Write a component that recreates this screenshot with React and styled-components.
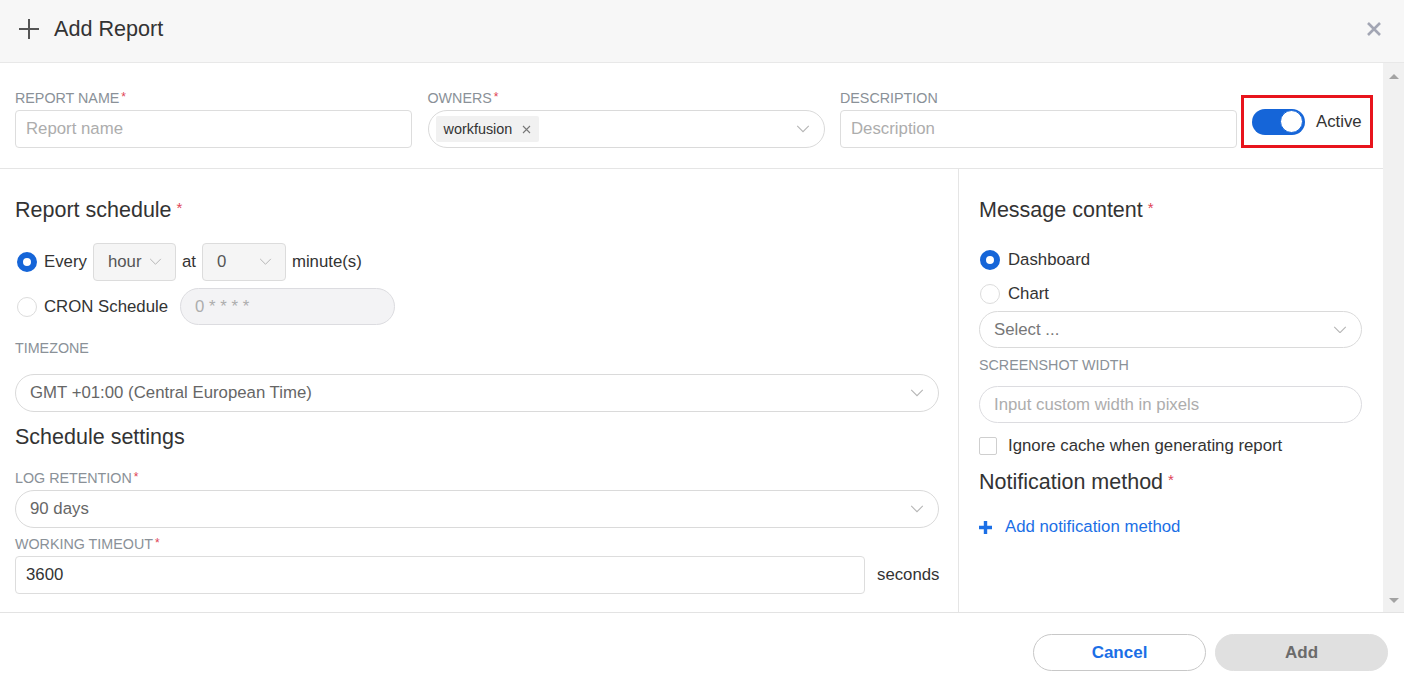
import React from 'react';
import styled, { createGlobalStyle } from 'styled-components';

const GlobalStyle = createGlobalStyle`
    html, body {
        margin: 0;
        padding: 0;
        background: #ffffff;
    }
    body {
        font-family: "Liberation Sans", Arial, sans-serif;
        color: #333;
    }
    * {
        box-sizing: border-box;
    }
`;

const Modal = styled.div`
    width: 1404px;
    height: 684px;
    display: flex;
    flex-direction: column;
    background: #fff;
    overflow: hidden;
`;

const Header = styled.header`
    height: 63px;
    flex: none;
    display: flex;
    align-items: center;
    padding: 0 22px 4px 19px;
    background: #f7f7f7;
    border-bottom: 1px solid #e8e8e8;
`;

const Title = styled.h1`
    margin: 0 0 0 15px;
    flex: 1;
    font-size: 21.6px;
    font-weight: 400;
    color: #333;
`;

const CloseButton = styled.button`
    border: none;
    background: none;
    padding: 0;
    display: flex;
    cursor: pointer;
`;

const Body = styled.div`
    flex: 1;
    display: flex;
    min-height: 0;
`;

const Content = styled.div`
    flex: 1;
    display: flex;
    flex-direction: column;
    overflow: hidden;
`;

const ScrollTrack = styled.div`
    width: 21px;
    flex: none;
    background: #f1f1f1;
    display: flex;
    flex-direction: column;
    justify-content: space-between;
    align-items: center;
    padding: 11px 0 9px;
`;

const Arrow = styled.div`
    width: 0;
    height: 0;
    border-left: 5px solid transparent;
    border-right: 5px solid transparent;
    ${({ $down }) =>
        $down ? 'border-top: 5px solid #a3a3a3;' : 'border-bottom: 5px solid #a3a3a3;'}
`;

const TopRow = styled.div`
    display: grid;
    grid-template-columns: 397px 397px 397px 132px;
    column-gap: 15.5px;
    padding: 27px 10px 20px 15px;
    border-bottom: 1px solid #e5e5e5;
    align-items: start;
`;

const Field = styled.div`
    display: flex;
    flex-direction: column;
`;

const Label = styled.label`
    display: block;
    font-size: 14.3px;
    line-height: 16px;
    color: #8a9198;
    text-transform: uppercase;
    white-space: nowrap;
    margin-top: ${({ $mt }) => $mt || 0}px;
    margin-bottom: 4px;
`;

const Req = styled.span`
    color: #e04355;
    margin-left: ${({ $big }) => ($big ? '5px' : '2px')};
    font-size: ${({ $big }) => ($big ? '15px' : '12px')};
    vertical-align: top;
    position: relative;
    top: ${({ $big }) => ($big ? '-2px' : '-1px')};
`;

const TextInput = styled.div`
    height: ${({ $h }) => $h || 38}px;
    width: ${({ $w }) => ($w ? `${$w}px` : '100%')};
    flex: none;
    display: flex;
    align-items: center;
    padding: 0 10px;
    border: 1px solid ${({ $pill }) => ($pill ? '#dcdce0' : '#dddddd')};
    border-radius: ${({ $pill }) => ($pill ? '19px' : '4px')};
    background: ${({ $muted }) => ($muted ? '#f3f3f5' : '#fff')};
    font-size: 16.8px;
    color: ${({ $placeholder }) => ($placeholder ? '#adadad' : '#333')};
    margin-top: ${({ $mt }) => $mt || 0}px;
    ${({ $pill }) => $pill && 'padding: 0 14px;'}
`;

const SelectBox = styled.div`
    height: ${({ $h }) => $h || 38}px;
    display: flex;
    align-items: center;
    justify-content: space-between;
    padding: 0 14px 0 14px;
    border: 1px solid #dadada;
    border-radius: 19px;
    background: #fff;
    font-size: 16.8px;
    color: ${({ $placeholder }) => ($placeholder ? '#777' : '#666')};
    margin-top: ${({ $mt }) => $mt || 0}px;
`;

const Tag = styled.span`
    display: inline-flex;
    align-items: center;
    gap: 10px;
    height: 26px;
    padding: 0 8px 0 8px;
    margin-left: -7px;
    background: #f1f1f1;
    border-radius: 2px;
    font-size: 14.4px;
    color: #333;
`;

const OwnerValue = styled.div`
    flex: 1;
    display: flex;
    align-items: center;
`;

const ToggleBox = styled.div`
    justify-self: start;
    width: 132px;
    margin: 5px 0 0 -11.5px;
    height: 53px;
    border: 3px solid #e8141c;
    display: flex;
    align-items: center;
    padding-left: 8px;
    gap: 11px;
    font-size: 16.8px;
    color: #333;
`;

const Switch = styled.span`
    width: 53px;
    height: 26px;
    flex: none;
    border-radius: 13px;
    background: #1565d8;
    display: flex;
    align-items: center;
    justify-content: flex-end;
    padding: 2px;
`;

const Knob = styled.span`
    width: 23px;
    height: 23px;
    border-radius: 50%;
    background: #fff;
    border: 1px solid #1565d8;
`;

const Columns = styled.div`
    flex: 1;
    display: flex;
`;

const LeftCol = styled.div`
    width: 959px;
    flex: none;
    padding: 0 19px 0 15px;
    border-right: 1px solid #e5e5e5;
`;

const RightCol = styled.div`
    flex: 1;
    padding: 0 21px 0 20px;
`;

const SectionTitle = styled.h2`
    margin: ${({ $mt }) => $mt || 0}px 0 0;
    font-size: 21.5px;
    line-height: 24px;
    font-weight: 400;
    color: #333;
`;

const Row = styled.div`
    display: flex;
    align-items: center;
    gap: ${({ $gap }) => $gap || 8}px;
    height: ${({ $h }) => $h || 20}px;
    margin-top: ${({ $mt }) => $mt || 0}px;
    font-size: 16.8px;
    color: #333;
    white-space: nowrap;
`;

const Radio = styled.span`
    width: 20px;
    height: 20px;
    flex: none;
    border-radius: 50%;
    margin-left: ${({ $ml }) => $ml || 0}px;
    margin-right: ${({ $mr }) => $mr || 0}px;
    ${({ $checked }) =>
        $checked
            ? 'border: 6px solid #1565d8; background: #fff;'
            : 'border: 1.5px solid #dcdcdc; background: #fff;'}
`;

const MiniSelect = styled.div`
    width: ${({ $w }) => $w}px;
    height: 38px;
    flex: none;
    display: flex;
    align-items: center;
    justify-content: space-between;
    padding: 0 13px 0 14px;
    background: #f5f5f5;
    border: 1px solid #dcdcdc;
    border-radius: 4px;
    color: #555;
    font-size: 16.8px;
`;

const Checkbox = styled.span`
    width: 18px;
    height: 18px;
    border: 1px solid #cfcfcf;
    border-radius: 2px;
    background: #fff;
    flex: none;
`;

const LinkButton = styled.button`
    display: flex;
    align-items: center;
    gap: 13px;
    border: none;
    background: none;
    padding: 0;
    margin-top: ${({ $mt }) => $mt || 0}px;
    height: 20px;
    font-family: inherit;
    font-size: 16.8px;
    color: #1b6fe6;
    cursor: pointer;
`;

const Footer = styled.footer`
    height: 72px;
    flex: none;
    border-top: 1px solid #e3e3e3;
    display: flex;
    justify-content: flex-end;
    align-items: flex-start;
    gap: 9px;
    padding: 21px 16px 0 0;
`;

const Button = styled.button`
    width: 173px;
    height: 37px;
    border-radius: 19px;
    font-family: inherit;
    font-size: 17px;
    font-weight: 700;
    cursor: pointer;
    ${({ $primary }) =>
        $primary
            ? 'background: #e0e0e0; border: 1px solid #e0e0e0; color: #6b6b6b;'
            : 'background: #fff; border: 1px solid #c8c8c8; color: #1b6fe6;'}
`;

const Chevron = ({ size = 14 }) => (
    <svg width={size} height={size * 0.55} viewBox="0 0 14 8" fill="none">
        <path d="M1 1l6 6 6-6" stroke="#b5b5b5" strokeWidth="1.1" />
    </svg>
);

const SmallX = () => (
    <svg width="9" height="9" viewBox="0 0 9 9">
        <path d="M1 1l7 7M8 1L1 8" stroke="#777" strokeWidth="1.1" />
    </svg>
);

function App() {
    return (
        <>
            <GlobalStyle />
            <Modal>
                <Header>
                    <svg width="20" height="20" viewBox="0 0 20 20">
                        <path d="M10 0v20M0 10h20" stroke="#555" strokeWidth="2" />
                    </svg>
                    <Title>Add Report</Title>
                    <CloseButton aria-label="close">
                        <svg width="16" height="16" viewBox="0 0 16 16">
                            <path d="M2 2l12 12M14 2L2 14" stroke="#a3a6b4" strokeWidth="2.6" />
                        </svg>
                    </CloseButton>
                </Header>
                <Body>
                    <Content>
                        <TopRow>
                            <Field>
                                <Label>
                                    Report name<Req>*</Req>
                                </Label>
                                <TextInput $placeholder>Report name</TextInput>
                            </Field>
                            <Field>
                                <Label>
                                    Owners<Req>*</Req>
                                </Label>
                                <SelectBox>
                                    <OwnerValue>
                                        <Tag>
                                            workfusion <SmallX />
                                        </Tag>
                                    </OwnerValue>
                                    <Chevron />
                                </SelectBox>
                            </Field>
                            <Field>
                                <Label>Description</Label>
                                <TextInput $placeholder>Description</TextInput>
                            </Field>
                            <ToggleBox>
                                <Switch>
                                    <Knob />
                                </Switch>
                                Active
                            </ToggleBox>
                        </TopRow>
                        <Columns>
                            <LeftCol>
                                <SectionTitle $mt={29}>
                                    Report schedule<Req $big>*</Req>
                                </SectionTitle>
                                <Row $mt={21} $h={38} $gap={6}>
                                    <Radio $checked $ml={2} $mr={1} />
                                    <span>Every</span>
                                    <MiniSelect $w={83}>
                                        hour <Chevron size={13} />
                                    </MiniSelect>
                                    <span>at</span>
                                    <MiniSelect $w={84}>
                                        0 <Chevron size={13} />
                                    </MiniSelect>
                                    <span>minute(s)</span>
                                </Row>
                                <Row $mt={7} $h={37} $gap={7}>
                                    <Radio $ml={2} />
                                    <span style={{ marginRight: 5 }}>CRON Schedule</span>
                                    <TextInput $pill $muted $placeholder $w={215} $h={37}>
                                        0 * * * *
                                    </TextInput>
                                </Row>
                                <Label $mt={15}>Timezone</Label>
                                <SelectBox $mt={18}>
                                    GMT +01:00 (Central European Time)
                                    <Chevron />
                                </SelectBox>
                                <SectionTitle $mt={13}>Schedule settings</SectionTitle>
                                <Label $mt={21}>
                                    Log retention<Req>*</Req>
                                </Label>
                                <SelectBox>
                                    90 days
                                    <Chevron />
                                </SelectBox>
                                <Label $mt={8}>
                                    Working timeout<Req>*</Req>
                                </Label>
                                <Row $h={38} $gap={12}>
                                    <TextInput $w={850}>3600</TextInput>
                                    <span>seconds</span>
                                </Row>
                            </LeftCol>
                            <RightCol>
                                <SectionTitle $mt={29}>
                                    Message content<Req $big>*</Req>
                                </SectionTitle>
                                <Row $mt={28}>
                                    <Radio $checked $ml={1} />
                                    <span>Dashboard</span>
                                </Row>
                                <Row $mt={14}>
                                    <Radio $ml={1} />
                                    <span>Chart</span>
                                </Row>
                                <SelectBox $mt={7} $h={37} $placeholder>
                                    Select ...
                                    <Chevron />
                                </SelectBox>
                                <Label $mt={9}>Screenshot width</Label>
                                <TextInput $pill $placeholder $h={37} $mt={13}>
                                    Input custom width in pixels
                                </TextInput>
                                <Row $mt={13} $gap={11}>
                                    <Checkbox />
                                    <span>Ignore cache when generating report</span>
                                </Row>
                                <SectionTitle $mt={14}>
                                    Notification method<Req $big>*</Req>
                                </SectionTitle>
                                <LinkButton $mt={23}>
                                    <svg width="13" height="13" viewBox="0 0 13 13">
                                        <path d="M6.5 0v13M0 6.5h13" stroke="#1b6fe6" strokeWidth="3.4" />
                                    </svg>
                                    Add notification method
                                </LinkButton>
                            </RightCol>
                        </Columns>
                    </Content>
                    <ScrollTrack>
                        <Arrow />
                        <Arrow $down />
                    </ScrollTrack>
                </Body>
                <Footer>
                    <Button>Cancel</Button>
                    <Button $primary>Add</Button>
                </Footer>
            </Modal>
        </>
    );
}

export default App;
